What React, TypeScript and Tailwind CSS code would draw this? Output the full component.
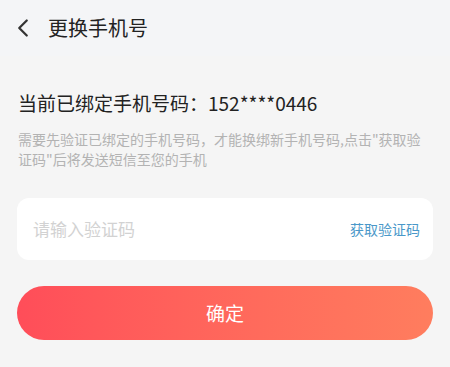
import { ChevronLeft } from 'lucide-react';

const font = { fontFamily: '"Noto Sans CJK SC", "Noto Sans", sans-serif' };

export default function App() {
  return (
    <div className="w-[450px] h-[367px] bg-[#f5f5f5] overflow-hidden" style={font}>
      {/* Header */}
      <div className="h-14 flex items-center bg-[#f4f5f7]">
        <ChevronLeft size={30} strokeWidth={1.8} className="ml-[8px] text-[#333]" />
        <span className="ml-[10px] text-[20px] text-[#222]">更换手机号</span>
      </div>

      <div className="px-[17px]">
        {/* Current phone */}
        <div className="mt-[33px] text-[19px] leading-7 text-[#222] pl-px">
          当前已绑定手机号码：152****0446
        </div>
        <p className="mt-[12px] text-[14px] leading-5 text-[#b3b3b3] pl-px pr-[8px]">
          需要先验证已绑定的手机号码，才能换绑新手机号码,点击"获取验证码"后将发送短信至您的手机
        </p>

        {/* Code input */}
        <div className="mt-[29px] h-[62px] bg-white rounded-[12px] flex items-center justify-between px-4">
          <span className="text-[17px] text-[#d2d2d2]">请输入验证码</span>
          <span className="text-[14px] text-[#4a98c9] mr-[-3px]">获取验证码</span>
        </div>

        {/* Confirm */}
        <button className="mt-[26px] w-full h-[54px] rounded-full bg-gradient-to-r from-[#ff4d59] to-[#ff7d5e] text-white text-[19px]">
          确定
        </button>
      </div>
    </div>
  );
}
